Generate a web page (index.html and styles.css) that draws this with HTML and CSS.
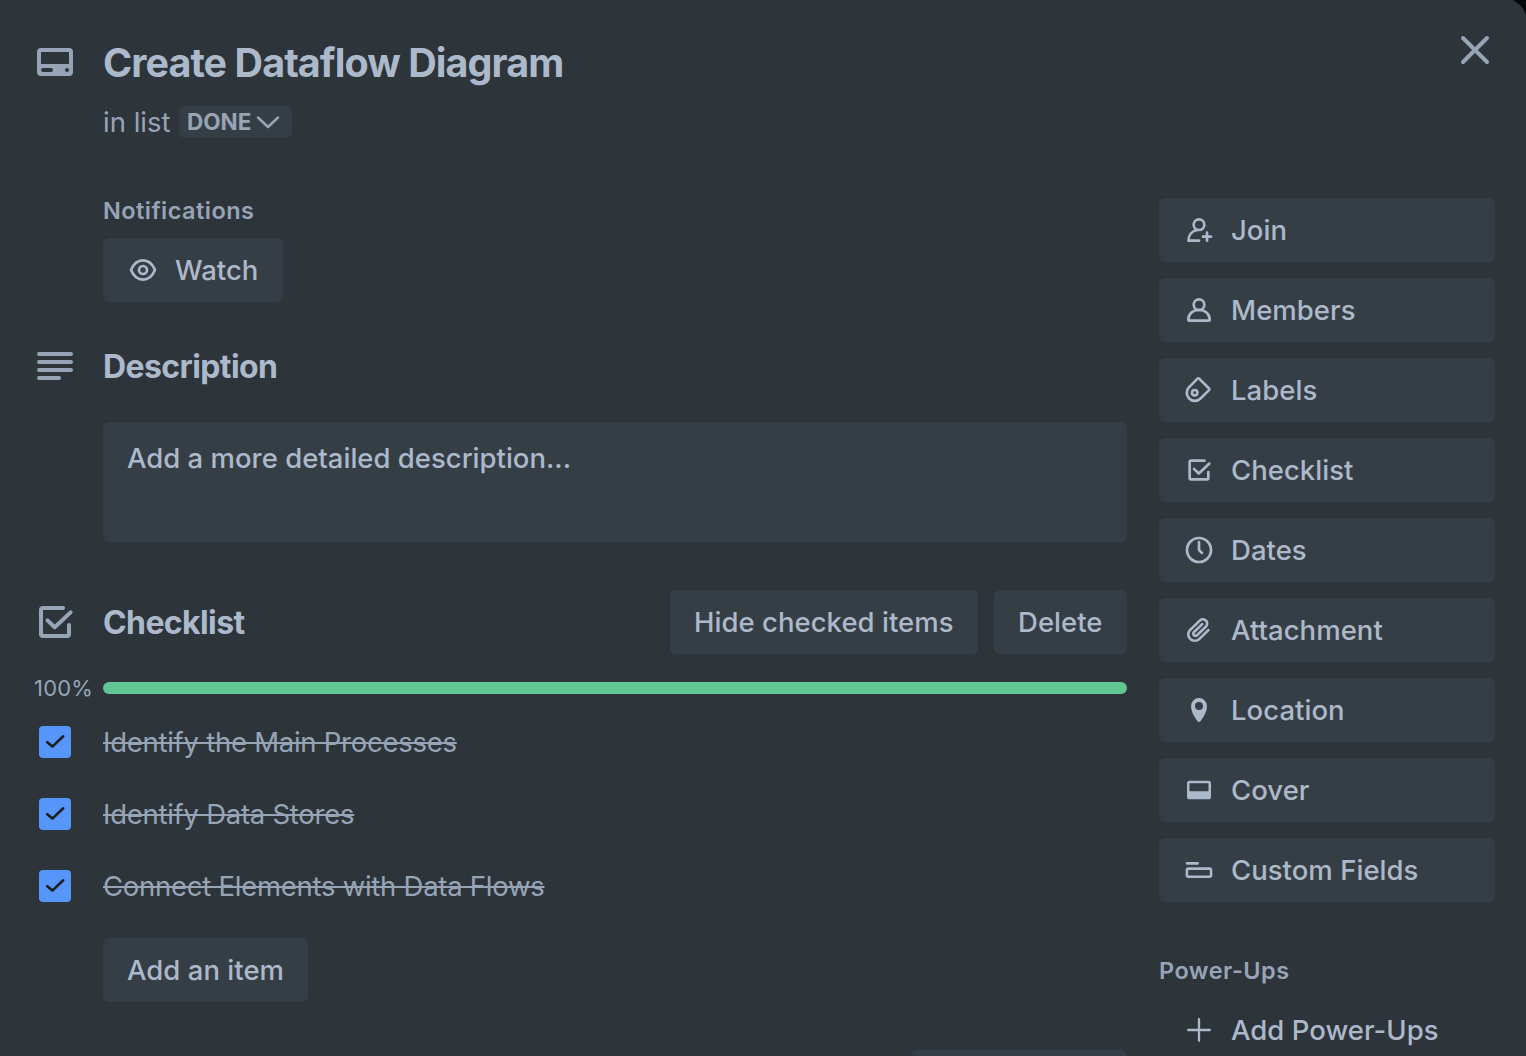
FILE: index.html
```html
<!DOCTYPE html>
<html lang="en">
<head>
<meta charset="utf-8">
<title>Create Dataflow Diagram</title>
<link rel="stylesheet" href="styles.css">
</head>
<body>
<svg class="defs" width="0" height="0">
  <symbol id="i-check" viewBox="0 0 32 32"><path d="M21.4 6.67H8A1.33 1.33 0 0 0 6.67 8v16A1.33 1.33 0 0 0 8 25.33h16A1.33 1.33 0 0 0 25.33 24v-6M11 14.9l4.8 4.6L26.4 9.6"/></symbol>
  <symbol id="i-tick" viewBox="0 0 32 32"><path d="M8.2 16.2l5.2 4.4L24.2 10.3"/></symbol>
</svg>
<div class="modal">
  <header class="head">
    <svg class="head-icon" viewBox="0 0 36 28"><path fill-rule="evenodd" d="M4 0h28a4 4 0 0 1 4 4v20a4 4 0 0 1-4 4H4a4 4 0 0 1-4-4V4a4 4 0 0 1 4-4ZM4 4v12h28V4ZM6 20a2 2 0 0 0 0 4h8a2 2 0 0 0 0-4ZM30 20a2 2 0 1 0 0 4a2 2 0 0 0 0-4Z"/></svg>
    <div class="head-text">
      <h1 class="title"><span>Create Dataflow Diagram</span></h1>
      <div class="in-list"><span class="in">in list</span><button class="chip"><span>DONE</span><svg class="chev line" viewBox="0 0 24 16"><path d="M2 3.5l10 9.5L22 3.5"/></svg></button></div>
    </div>
    <svg class="close line" viewBox="0 0 32 32"><path d="M4 4l24 24M28 4L4 28"/></svg>
  </header>
  <div class="columns">
    <main class="main">
      <section class="notify">
        <h3 class="label">Notifications</h3>
        <button class="btn watch"><svg class="icon line" viewBox="0 0 32 32"><path d="M4 16C6.5 10 11 6.4 16 6.4S25.5 10 28 16C25.5 22 21 25.6 16 25.6S6.5 22 4 16Z"/><circle cx="16" cy="16" r="4"/></svg><span>Watch</span></button>
      </section>
      <section class="desc">
        <div class="row"><svg class="sec-icon line" viewBox="0 0 48 48"><path d="M8 12h32M8 20h32M8 28h32M8 36h20"/></svg><h2 class="heading">Description</h2></div>
        <div class="box"><span>Add a more detailed description...</span></div>
      </section>
      <section class="checks">
        <div class="row"><svg class="sec-icon check line"><use href="#i-check"/></svg><h2 class="heading">Checklist</h2>
          <button class="btn hide"><span>Hide checked items</span></button><button class="btn del"><span>Delete</span></button></div>
        <div class="progress"><span class="pct">100%</span><div class="bar"></div></div>
        <ul class="items">
          <li><i class="tick"><svg class="line"><use href="#i-tick"/></svg></i><s>Identify the Main Processes</s></li>
          <li><i class="tick"><svg class="line"><use href="#i-tick"/></svg></i><s>Identify Data Stores</s></li>
          <li><i class="tick"><svg class="line"><use href="#i-tick"/></svg></i><s>Connect Elements with Data Flows</s></li>
        </ul>
        <button class="btn add"><span>Add an item</span></button>
      </section>
      <button class="btn more"></button>
    </main>
    <aside class="side">
      <button class="btn"><svg class="icon line" viewBox="0 0 32 32"><circle cx="16" cy="10.67" r="5.33"/><path d="M16 26.67H5.4C5.4 21 9 16.8 14.5 16M24 18.67v8M20 22.67h8"/></svg><span>Join</span></button>
      <button class="btn"><svg class="icon line" viewBox="0 0 32 32"><circle cx="16" cy="10.67" r="5.33"/><path d="M16 16C9.5 16 5.33 20.3 5.33 25.5a1.17 1.17 0 0 0 1.17 1.17h19a1.17 1.17 0 0 0 1.17-1.17C26.67 20.3 22.5 16 16 16Z"/></svg><span>Members</span></button>
      <button class="btn"><svg class="icon line" viewBox="0 0 32 32"><path d="M14.3 4.9a1.5 1.5 0 0 1 2.1 0l9.4 9.4a1.5 1.5 0 0 1 0 2.1l-8.3 8.1A8 8 0 0 1 6.1 13.1Z"/><circle cx="11.7" cy="18.7" r="2.7"/></svg><span>Labels</span></button>
      <button class="btn"><svg class="icon line"><use href="#i-check"/></svg><span>Checklist</span></button>
      <button class="btn"><svg class="icon line" viewBox="0 0 32 32"><circle cx="16" cy="16" r="12"/><path d="M16 8v8l3 3"/></svg><span>Dates</span></button>
      <button class="btn"><svg class="icon" viewBox="0 0 24 24"><path d="M11.6426 17.9647C10.1123 19.46 7.62736 19.4606 6.10092 17.9691C4.57505 16.478 4.57769 14.0467 6.10253 12.5566L13.2505 5.57184C14.1476 4.6952 15.5861 4.69251 16.4832 5.56921C17.3763 6.44184 17.3778 7.85135 16.4869 8.72199L9.78361 15.2722C9.53288 15.5172 9.12807 15.5163 8.86954 15.2636C8.61073 15.0107 8.60963 14.6158 8.86954 14.3618L15.0989 8.27463C15.4812 7.90109 15.4812 7.29546 15.0989 6.92192C14.7167 6.54838 14.0969 6.54838 13.7146 6.92192L7.48523 13.0091C6.45911 14.0118 6.46356 15.618 7.48523 16.6163C8.50674 17.6145 10.1511 17.6186 11.1679 16.6249L17.8712 10.0747C19.5274 8.45632 19.5244 5.83555 17.8676 4.2165C16.2047 2.59156 13.5266 2.59657 11.8662 4.21913L4.71822 11.2039C2.42951 13.4404 2.42555 17.083 4.71661 19.3218C7.00774 21.5606 10.7323 21.5597 13.0269 19.3174L19.7133 12.7837C20.0956 12.4101 20.0956 11.8045 19.7133 11.431C19.331 11.0574 18.7113 11.0574 18.329 11.431L11.6426 17.9647Z"/></svg><span>Attachment</span></button>
      <button class="btn"><svg class="icon" viewBox="0 0 32 32"><path fill-rule="evenodd" d="M16 4a8 8 0 0 0-8 8.2c0 4.5 2.5 9.8 6.5 15 .8 1 2.2 1 3 0C21.5 22 24 16.7 24 12.2A8 8 0 0 0 16 4ZM16 8a4 4 0 1 1 0 8a4 4 0 0 1 0-8Z"/></svg><span>Location</span></button>
      <button class="btn"><svg class="icon" viewBox="0 0 32 32"><path fill-rule="evenodd" d="M6.67 6.67h18.66A2.67 2.67 0 0 1 28 9.33v13.34a2.67 2.67 0 0 1-2.67 2.66H6.67A2.67 2.67 0 0 1 4 22.67V9.33a2.67 2.67 0 0 1 2.67-2.66ZM6.5 9.2v8.13h19V9.2Z"/></svg><span>Cover</span></button>
      <button class="btn"><svg class="icon" viewBox="0 0 32 32"><path fill-rule="evenodd" d="M4 8h10.67a1.33 1.33 0 0 1 0 2.67H4A1.33 1.33 0 0 1 4 8ZM5.33 13.33h21.34a2.67 2.67 0 0 1 2.66 2.67v5.33A2.67 2.67 0 0 1 26.67 24H5.33a2.67 2.67 0 0 1-2.66-2.67V16a2.67 2.67 0 0 1 2.66-2.67ZM5.2 15.9v5.5h21.6v-5.5Z"/></svg><span>Custom Fields</span></button>
      <h3 class="label l-power">Power-Ups</h3>
      <button class="btn ghost"><svg class="icon line thin" viewBox="0 0 32 32"><path d="M16 5.2v21.6M5.2 16h21.6"/></svg><span>Add Power-Ups</span></button>
    </aside>
  </div>
</div>
</body>
</html>
```
FILE: styles.css
```css
* { box-sizing: border-box; }
body { margin: 0; height: 1056px; overflow: hidden; background: #05080b; font-family: Inter, "Liberation Sans", sans-serif; color: #acb9ca; }
h1, h2, h3, ul { margin: 0; padding: 0; }
svg { display: block; flex: none; fill: currentColor; }
.defs { position: absolute; }
.line { fill: none; stroke: currentColor; stroke-width: 2.67; stroke-linecap: round; stroke-linejoin: round; }
.modal { width: 1527px; height: 1100px; margin-top: -2px; padding: 41px 32px 0 31px; background: #2d343a; border-top-right-radius: 24px; overflow: hidden; }

.head { display: flex; height: 159px; }
.head-icon { width: 36px; height: 28px; margin: 9px 30px 0 6px; color: #96a4b6; }
.head-text { flex: 1; }
.title { font-size: 39.5px; line-height: 48px; font-weight: 700; letter-spacing: -0.94px; }
.in-list { display: flex; gap: 8px; margin-top: 19px; height: 32px; color: #96a4b6; font-size: 27.5px; line-height: 32px; }
.in { width: 68px; white-space: nowrap; }
.chip { display: flex; align-items: center; gap: 4px; width: 113px; padding: 0 8px; border: 0; border-radius: 6px; background: #363e45; color: #96a4b6; font: 700 22.5px/32px Inter, sans-serif; }
.chip span { width: 65px; text-align: left; }
.chev { width: 24px; height: 16px; stroke-width: 2.5; }
.close { width: 32px; height: 32px; margin: -5px 4px 0 0; color: #96a4b6; stroke-width: 4; }

.columns { display: flex; gap: 32px; }
.main { width: 1096px; display: flex; flex-direction: column; }
.label { font-size: 23.5px; line-height: 24px; font-weight: 600; letter-spacing: 0.45px; color: #96a4b6; }
.btn { display: flex; align-items: center; height: 64px; padding: 0 24px; border: 0; border-radius: 6px; background: #363e45; color: #acb9ca; font: 500 27.5px/32px Inter, sans-serif; letter-spacing: 0.03px; white-space: nowrap; }
.icon { width: 32px; height: 32px; margin-right: 16px; }
.notify { padding: 1px 0 0 72px; }
.watch { width: 180px; margin-top: 15px; }
.desc { margin-top: 45px; }
.row { display: flex; align-items: center; }
.sec-icon { width: 48px; height: 48px; margin-right: 24px; color: #96a4b6; stroke-width: 4; }
.sec-icon.check { stroke-width: 2.67; }
.desc .row { height: 40px; }
.desc .sec-icon { margin-top: -2px; }
.heading { flex: 1; font-size: 32px; line-height: 40px; font-weight: 700; letter-spacing: -0.6px; }
.checks .heading { padding-top: 1px; }
.box { height: 120px; margin: 35px 0 0 72px; padding: 20px 24px; border-radius: 6px; background: #363e45; font: 500 27.5px/32px Inter, sans-serif; }
.checks { margin-top: 48px; }
.hide { width: 308px; }
.del { width: 133px; margin-left: 16px; }
.progress { display: flex; align-items: center; height: 24px; margin-top: 22px; padding-left: 3px; color: #96a4b6; }
.pct { width: 69px; font-size: 22px; line-height: 24px; letter-spacing: 0.2px; }
.bar { flex: 1; height: 12px; border-radius: 6px; background: #60c692; }
.items { list-style: none; margin-top: 6px; color: #96a4b6; }
.items li { display: flex; align-items: center; height: 72px; padding-left: 8px; font-size: 27.5px; letter-spacing: -0.26px; }
.tick { width: 32px; height: 32px; margin-right: 32px; border-radius: 4px; background: #5596f8; color: #1b2025; }
.tick svg { width: 32px; height: 32px; }
.items s { text-decoration-thickness: 2px; }
.add { width: 205px; margin: 16px 0 0 72px; }
.more { width: 216px; margin: 48px 0 0 auto; }

.side { width: 336px; display: flex; flex-direction: column; gap: 16px; }
.l-power { margin-top: 41px; }
.ghost { background: none; margin-top: -1px; }
.thin { stroke-width: 2.3; }
```
